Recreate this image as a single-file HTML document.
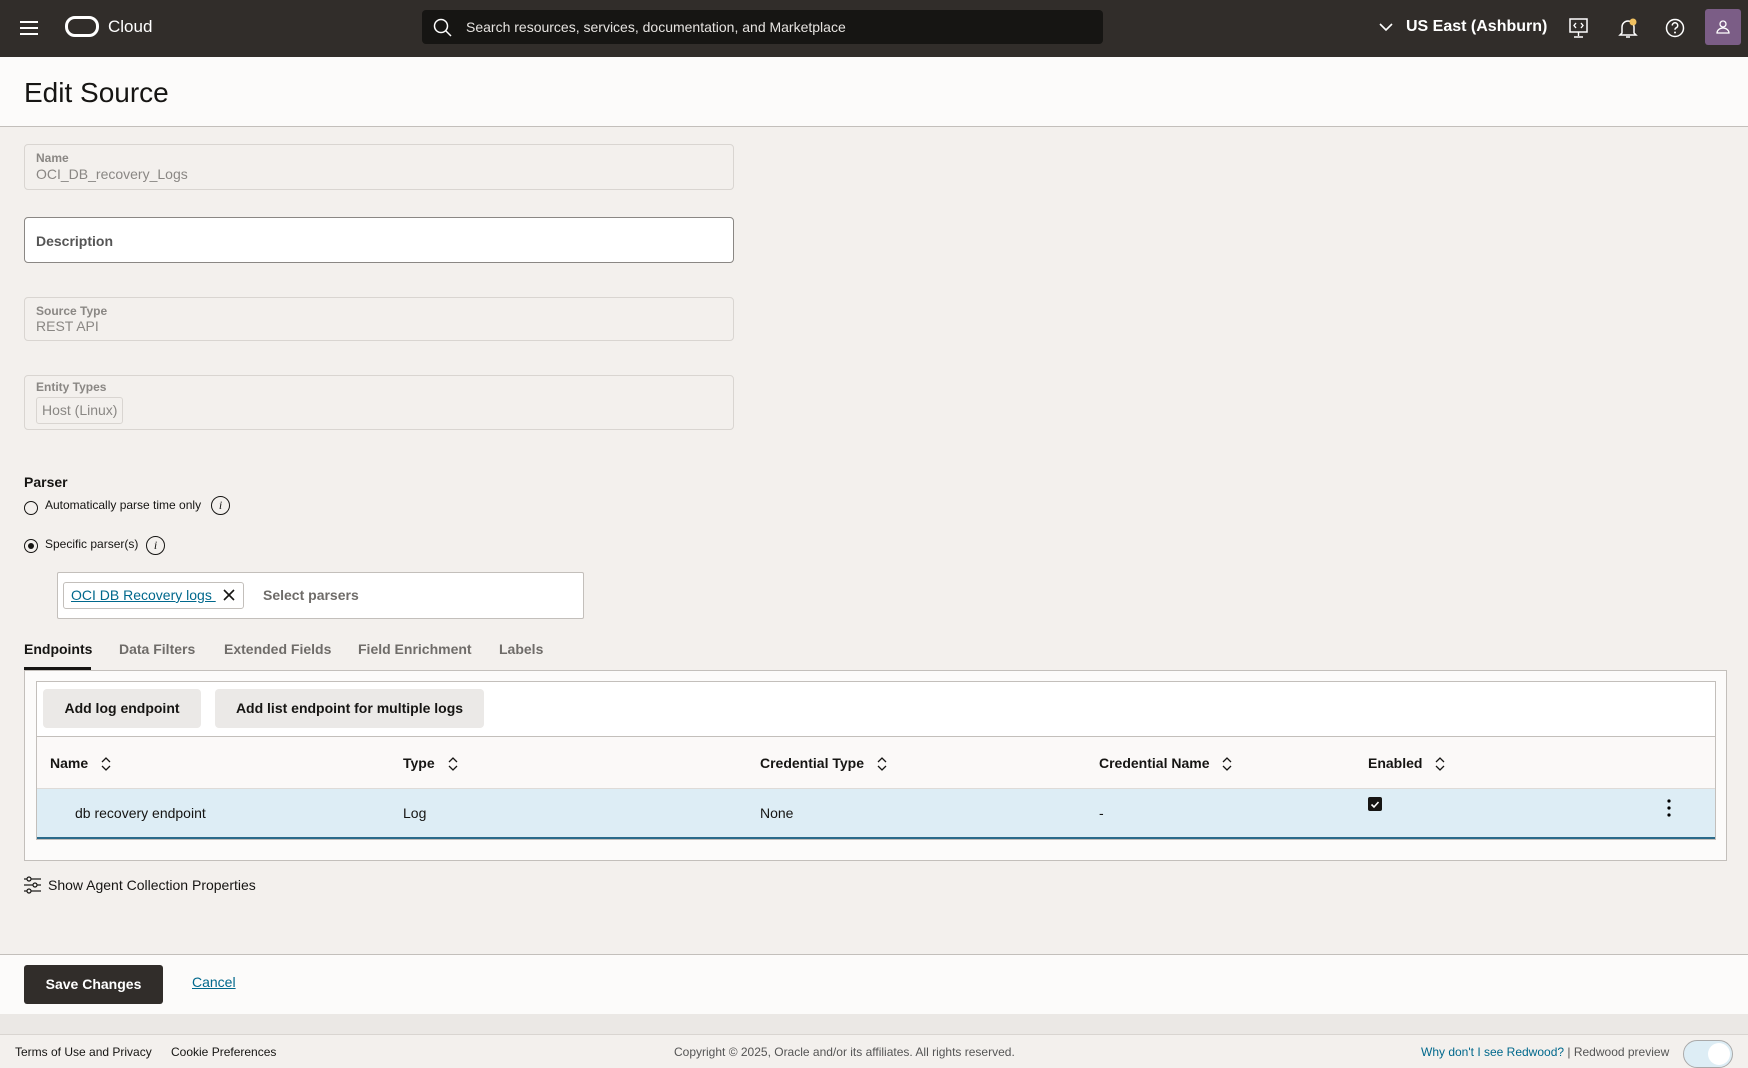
<!DOCTYPE html>
<html><head><meta charset="utf-8"><style>
*{box-sizing:border-box;margin:0;padding:0}
body{width:1748px;height:1065px;overflow:hidden;background:#f3f0ed;font-family:"Liberation Sans",sans-serif;color:#161513;position:relative}
.a{position:absolute}
.hdr{left:0;top:0;width:1748px;height:57px;background:#312d2a}
.fld{left:24px;width:710px;border:1px solid #d9d5d1;border-radius:4px;background:#f3f0ed}
.lbl{font-size:12px;font-weight:bold;color:#8a8784;position:absolute;left:11px}
.val{font-size:14px;color:#8a8784;position:absolute;left:11px}
.tab{font-size:14px;font-weight:bold;color:#6f6c69;top:641px}
.th{font-size:14px;font-weight:bold;top:755px}
.td{font-size:14px;top:805px}
.sort{display:inline-block;margin-left:12px;vertical-align:middle}
</style></head><body>
<div class="a hdr"></div>
<svg class="a" style="left:19px;top:20px" width="20" height="16"><g stroke="#fff" stroke-width="2"><line x1="1" y1="2" x2="19" y2="2"/><line x1="1" y1="8" x2="19" y2="8"/><line x1="1" y1="14" x2="19" y2="14"/></g></svg>
<div class="a" style="left:65px;top:16px;width:34px;height:21px;border:3.5px solid #fff;border-radius:10px"></div>
<div class="a" style="left:108px;top:17px;font-size:17px;color:#fff">Cloud</div>
<div class="a" style="left:422px;top:10px;width:681px;height:34px;background:#161513;border-radius:4px"></div>
<svg class="a" style="left:433px;top:18px" width="20" height="20"><circle cx="8" cy="8" r="6.5" stroke="#fff" stroke-width="1.5" fill="none"/><line x1="12.5" y1="12.5" x2="18" y2="18" stroke="#fff" stroke-width="1.5"/></svg>
<div class="a" style="left:466px;top:19px;font-size:14px;color:#e6e3e0">Search resources, services, documentation, and Marketplace</div>
<svg class="a" style="left:1378px;top:21px" width="16" height="12"><path d="M2 3l6 6 6-6" stroke="#fff" stroke-width="1.6" fill="none"/></svg>
<div class="a" style="left:1406px;top:18px;font-size:16px;color:#fff;font-weight:bold">US East (Ashburn)</div>
<svg class="a" style="left:1568px;top:17px" width="22" height="22"><rect x="2" y="2" width="17" height="13" stroke="#fff" stroke-width="1.5" fill="none"/><path d="M8 6l-2 2.5 2 2.5M13 6l2 2.5-2 2.5M10.5 15v4M6 20h9" stroke="#fff" stroke-width="1.4" fill="none"/></svg>
<svg class="a" style="left:1617px;top:17px" width="22" height="22"><path d="M5 16V10a6 6 0 0 1 12 0v6l2 2H3z" stroke="#fff" stroke-width="1.5" fill="none"/><path d="M9 20h4" stroke="#fff" stroke-width="1.5"/><circle cx="16" cy="5" r="3.5" fill="#f0c060"/></svg>
<svg class="a" style="left:1664px;top:17px" width="22" height="22"><circle cx="11" cy="11" r="8.5" stroke="#fff" stroke-width="1.5" fill="none"/><path d="M8.3 8.5a2.7 2.7 0 1 1 3.6 2.5c-.8.4-.9.9-.9 1.8" stroke="#fff" stroke-width="1.5" fill="none"/><circle cx="11" cy="15.5" r="1" fill="#fff"/></svg>
<div class="a" style="left:1705px;top:9px;width:36px;height:36px;background:#7b5d86;border-radius:3px"></div>
<svg class="a" style="left:1714px;top:18px" width="18" height="18"><circle cx="9" cy="6" r="3" stroke="#fff" stroke-width="1.3" fill="none"/><path d="M3 15a6 5 0 0 1 12 0z" stroke="#fff" stroke-width="1.3" fill="none"/></svg>

<div class="a" style="left:0;top:57px;width:1748px;height:70px;background:#fcfbfa;border-bottom:1px solid #c3bfbb"></div>
<div class="a" style="left:24px;top:77px;font-size:28px">Edit Source</div>

<div class="a fld" style="top:144px;height:46px"><span class="lbl" style="top:6px">Name</span><span class="val" style="top:21px">OCI_DB_recovery_Logs</span></div>
<div class="a fld" style="top:217px;height:46px;background:#fff;border-color:#8a8784"><span class="lbl" style="top:15px;font-size:14px;color:#555">Description</span></div>
<div class="a fld" style="top:297px;height:44px"><span class="lbl" style="top:6px">Source Type</span><span class="val" style="top:20px">REST API</span></div>
<div class="a fld" style="top:375px;height:55px"><span class="lbl" style="top:4px">Entity Types</span><span class="a" style="left:11px;top:21px;height:27px;padding:0 5px;border:1px solid #d9d5d1;border-radius:3px;font-size:14px;color:#8a8784;line-height:25px">Host (Linux)</span></div>

<div class="a" style="left:24px;top:474px;font-size:14px;font-weight:bold">Parser</div>
<div class="a" style="left:24px;top:501px;width:14px;height:14px;border:1.3px solid #161513;border-radius:50%"></div>
<div class="a" style="left:45px;top:498px;font-size:12px">Automatically parse time only</div>
<div class="a" style="left:211px;top:496px;width:19px;height:19px;border:1.3px solid #161513;border-radius:50%;font:italic 12px 'Liberation Serif',serif;text-align:center;line-height:17px">i</div>
<div class="a" style="left:24px;top:539px;width:14px;height:14px;border:1.3px solid #161513;border-radius:50%"><div style="margin:2.5px;width:6.5px;height:6.5px;background:#161513;border-radius:50%"></div></div>
<div class="a" style="left:45px;top:537px;font-size:12px">Specific parser(s)</div>
<div class="a" style="left:146px;top:536px;width:19px;height:19px;border:1.3px solid #161513;border-radius:50%;font:italic 12px 'Liberation Serif',serif;text-align:center;line-height:17px">i</div>

<div class="a" style="left:57px;top:572px;width:527px;height:47px;background:#fff;border:1px solid #c3bfbb;border-radius:2px"></div>
<div class="a" style="left:63px;top:582px;width:181px;height:27px;border:1px solid #c3bfbb;border-radius:3px;background:#fff"></div>
<div class="a" style="left:71px;top:587px;font-size:14px;color:#00688c;text-decoration:underline">OCI DB Recovery logs&nbsp;</div>
<svg class="a" style="left:222px;top:588px" width="14" height="14"><path d="M2 2l10 10M12 2L2 12" stroke="#161513" stroke-width="1.6"/></svg>
<div class="a" style="left:263px;top:587px;font-size:14px;font-weight:bold;color:#6f6c69">Select parsers</div>

<div class="a tab" style="left:24px;color:#161513">Endpoints</div>
<div class="a tab" style="left:119px">Data Filters</div>
<div class="a tab" style="left:224px">Extended Fields</div>
<div class="a tab" style="left:358px">Field Enrichment</div>
<div class="a tab" style="left:499px">Labels</div>
<div class="a" style="left:24px;top:670px;width:1703px;height:191px;background:#fcfbfa;border:1px solid #c3bfbb"></div>
<div class="a" style="left:24px;top:667px;width:67px;height:3px;background:#161513"></div>
<div class="a" style="left:36px;top:681px;width:1680px;height:159px;background:#fff;border:1px solid #c3bfbb"></div>
<div class="a" style="left:43px;top:689px;width:158px;height:39px;background:#ebe9e7;border-radius:4px;font-size:14px;font-weight:bold;text-align:center;line-height:39px">Add log endpoint</div>
<div class="a" style="left:215px;top:689px;width:269px;height:39px;background:#ebe9e7;border-radius:4px;font-size:14px;font-weight:bold;text-align:center;line-height:39px">Add list endpoint for multiple logs</div>
<div class="a" style="left:37px;top:736px;width:1678px;height:53px;background:#fbf9f8;border-top:1px solid #c3bfbb;border-bottom:1px solid #dedbd8"></div>
<div class="a" style="left:37px;top:789px;width:1678px;height:50px;background:#ddedf5;border-bottom:2px solid #2a6a8a"></div>
<svg width="0" height="0" style="position:absolute"><defs><g id="s"><path d="M2 5l4-4 4 4M2 9l4 4 4-4" stroke="#161513" stroke-width="1.3" fill="none"/></g></defs></svg>
<div class="a th" style="left:50px">Name<svg class="sort" width="12" height="14"><use href="#s"/></svg></div>
<div class="a th" style="left:403px">Type<svg class="sort" width="12" height="14"><use href="#s"/></svg></div>
<div class="a th" style="left:760px">Credential Type<svg class="sort" width="12" height="14"><use href="#s"/></svg></div>
<div class="a th" style="left:1099px">Credential Name<svg class="sort" width="12" height="14"><use href="#s"/></svg></div>
<div class="a th" style="left:1368px">Enabled<svg class="sort" width="12" height="14"><use href="#s"/></svg></div>
<div class="a td" style="left:75px">db recovery endpoint</div>
<div class="a td" style="left:403px">Log</div>
<div class="a td" style="left:760px">None</div>
<div class="a td" style="left:1099px">-</div>
<div class="a" style="left:1368px;top:797px;width:14px;height:14px;background:#161513;border-radius:2px"></div>
<svg class="a" style="left:1368px;top:797px" width="14" height="14"><path d="M3.5 7.5l2.5 2.5 4.5-5" stroke="#fff" stroke-width="1.6" fill="none"/></svg>
<svg class="a" style="left:1666px;top:798px" width="6" height="20"><circle cx="3" cy="3" r="1.6"/><circle cx="3" cy="10" r="1.6"/><circle cx="3" cy="17" r="1.6"/></svg>

<svg class="a" style="left:24px;top:876px" width="18" height="18"><g stroke="#161513" stroke-width="1.2" fill="none"><line x1="0" y1="3" x2="3" y2="3"/><circle cx="5" cy="3" r="2"/><line x1="7" y1="3" x2="17" y2="3"/><line x1="0" y1="9" x2="9" y2="9"/><circle cx="11" cy="9" r="2"/><line x1="13" y1="9" x2="17" y2="9"/><line x1="0" y1="15" x2="3" y2="15"/><circle cx="5" cy="15" r="2"/><line x1="7" y1="15" x2="17" y2="15"/></g></svg>
<div class="a" style="left:48px;top:877px;font-size:14px">Show Agent Collection Properties</div>

<div class="a" style="left:0;top:954px;width:1748px;height:60px;background:#fcfbfa;border-top:1px solid #c3bfbb"></div>
<div class="a" style="left:24px;top:965px;width:139px;height:39px;background:#312d2a;border-radius:3px;color:#fff;font-size:14px;font-weight:bold;text-align:center;line-height:39px">Save Changes</div>
<div class="a" style="left:192px;top:974px;font-size:14px;color:#00688c;text-decoration:underline">Cancel</div>
<div class="a" style="left:0;top:1014px;width:1748px;height:21px;background:#ebe8e5;border-bottom:1px solid #d9d5d1"></div>
<div class="a" style="left:0;top:1035px;width:1748px;height:30px;background:#f3f0ed"></div>
<div class="a" style="left:15px;top:1045px;font-size:12px">Terms of Use and Privacy</div>
<div class="a" style="left:171px;top:1045px;font-size:12px">Cookie Preferences</div>
<div class="a" style="left:674px;top:1045px;font-size:12px;color:#555">Copyright © 2025, Oracle and/or its affiliates. All rights reserved.</div>
<div class="a" style="left:1421px;top:1045px;font-size:12px;color:#00688c">Why don't I see Redwood? <span style="color:#555">|</span> <span style="color:#555">Redwood preview</span></div>
<div class="a" style="left:1683px;top:1040px;width:50px;height:28px;border:1px solid #aaa;border-radius:14px;background:#ddedf5"><div style="position:absolute;right:2px;top:2px;width:22px;height:22px;background:#fff;border-radius:50%"></div></div>
</body></html>
